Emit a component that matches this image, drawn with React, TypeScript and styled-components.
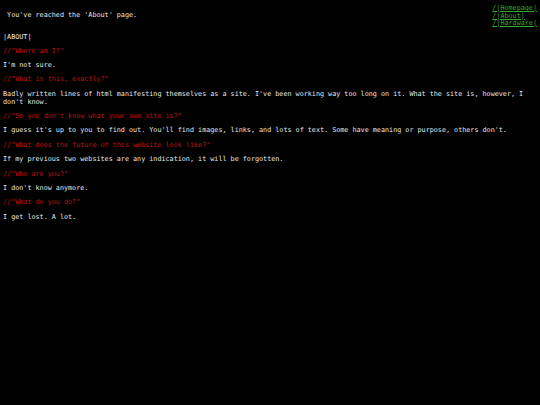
import React from 'react';
import styled, { createGlobalStyle } from 'styled-components';

const GlobalStyle = createGlobalStyle`
  html, body {
    margin: 0;
    padding: 0;
    background: #000;
  }
  body {
    font-family: "DejaVu Sans Mono", "Liberation Mono", monospace;
    font-size: 6.75px;
    color: #e8e8e8;
  }
`;

const qa = [
  { q: '//"Where am I?"', a: ["I'm not sure."] },
  { q: '//"What is this, exactly?"', a: ["Badly written lines of html manifesting themselves as a site. I've been working way too long on it. What the site is, however, I don't know."] },
  { q: '//"So you don\'t know what your own site is?"', a: ["I guess it's up to you to find out. You'll find images, links, and lots of text. Some have meaning or purpose, others don't."] },
  { q: '//"What does the future of this website look like?"', a: ['If my previous two websites are any indication, it will be forgotten.'] },
  { q: '//"Who are you?"', a: ["I don't know anymore."] },
  { q: '//"What do you do?"', a: ['I get lost. A lot.'] },
];

const App = () => {
  return (
    <>
      <GlobalStyle />
      <Page>
        <Header>
          <Greeting>&nbsp;You've reached the 'About' page.</Greeting>
          <Nav>
            <NavLink href="#">/|Homepage|</NavLink>
            <NavLink href="#">/|About|</NavLink>
            <NavLink href="#">/|Hardware|</NavLink>
          </Nav>
        </Header>
        <Title>|ABOUT|</Title>
        <Entries>
          {qa.map((item) => (
            <React.Fragment key={item.q}>
              <Question>{item.q}</Question>
              {item.a.map((line) => (
                <Answer key={line}>{line}</Answer>
              ))}
            </React.Fragment>
          ))}
        </Entries>
      </Page>
    </>
  );
}

const Page = styled.div`
  padding: 3px 3px 0 3px;
  display: flex;
  flex-direction: column;
  min-height: 402px;
  background: #000;
`;

const Header = styled.div`
  display: flex;
  justify-content: space-between;
  align-items: center;
`;

const Greeting = styled.div`
  line-height: 8px;
  white-space: pre;
`;

const Nav = styled.nav`
  display: flex;
  flex-direction: column;
  align-items: flex-start;
  padding-top: 2px;
`;

const NavLink = styled.a`
  color: #2faa2f;
  text-decoration: underline;
  line-height: 7.5px;
`;

const Title = styled.div`
  margin-top: 5px;
  line-height: 8px;
`;

const Entries = styled.div`
  display: flex;
  flex-direction: column;
  gap: 6.4px;
  margin-top: 6px;
`;

const Question = styled.p`
  margin: 0;
  color: #c01010;
  line-height: 8px;
`;

const Answer = styled.p`
  margin: 0;
  line-height: 8px;
  padding-right: 12px;
`;

export default App;
